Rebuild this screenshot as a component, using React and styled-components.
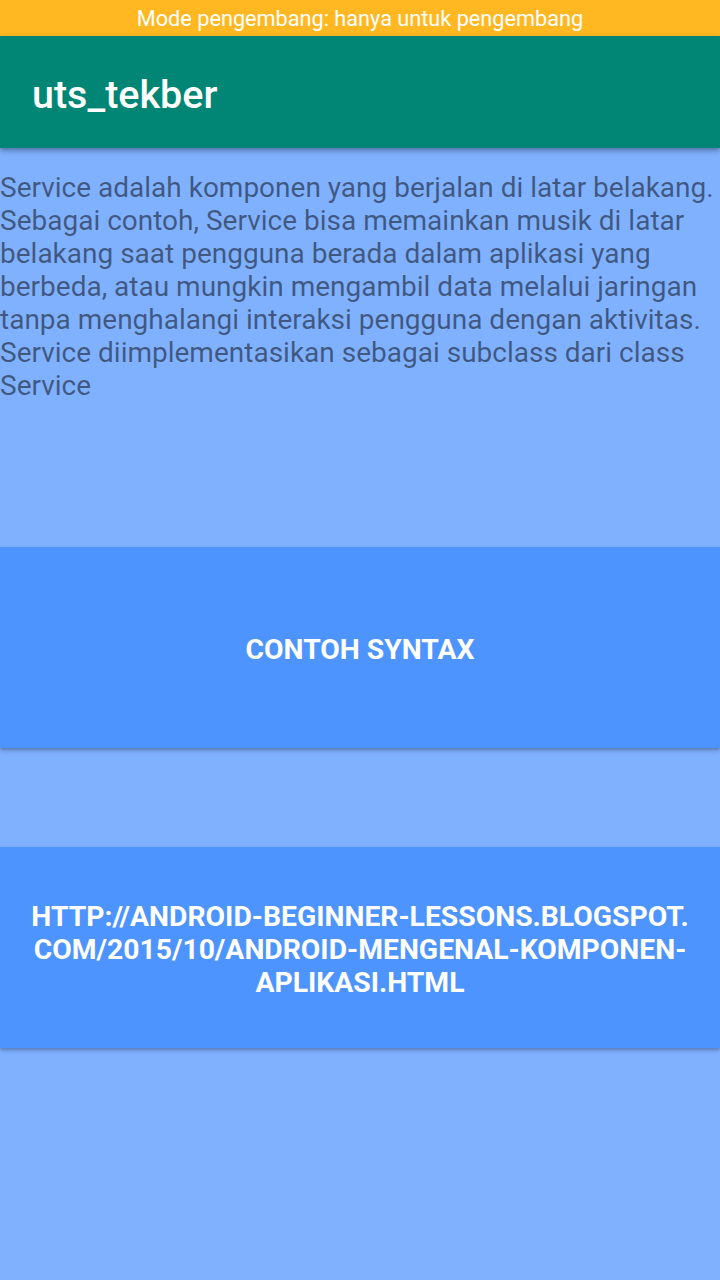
import React from "react";
import styled, { createGlobalStyle } from "styled-components";

const Global = createGlobalStyle`
  html, body { margin: 0; padding: 0; }
  body {
    background: #80b1ff;
    font-family: Roboto, "Noto Sans", "Liberation Sans", sans-serif;
  }
`;

const Screen = styled.div`
  width: 720px;
  min-height: 1280px;
  background: #80b1ff;
  display: flex;
  flex-direction: column;
  overflow: hidden;
`;

const StatusBar = styled.div`
  height: 36px;
  background: #ffb822;
  color: #ffffff;
  font-size: 21.7px;
  display: flex;
  align-items: center;
  justify-content: center;
`;

const AppBar = styled.header`
  height: 112px;
  background: #018675;
  display: flex;
  align-items: center;
  padding: 0 32px;
  box-shadow: 0 2px 4px rgba(0, 0, 0, 0.28), 0 4px 8px rgba(0, 0, 0, 0.12);
  position: relative;
  z-index: 2;
`;

const Title = styled.h1`
  margin: 0;
  margin-top: 4px;
  font-size: 39.5px;
  font-weight: 500;
  color: #ffffff;
`;

const Content = styled.main`
  display: flex;
  flex-direction: column;
`;

const Paragraph = styled.p`
  margin: 0;
  padding-top: 23px;
  height: 376px;
  box-sizing: border-box;
  height: 399px;
  font-size: 28px;
  line-height: 33px;
  color: rgba(0, 0, 0, 0.5);
`;

const ActionButton = styled.button`
  border: none;
  width: 100%;
  height: 201px;
  margin-bottom: ${(p) => p.$gap || 0}px;
  background: #4d94ff;
  color: #ffffff;
  font-family: Roboto, "Noto Sans", "Liberation Sans", sans-serif;
  font-weight: 700;
  font-size: 28.3px;
  line-height: 33px;
  text-transform: uppercase;
  padding: 4px 16px 0;
  box-shadow: 0 2px 3px rgba(0, 0, 0, 0.22), 0 3px 6px rgba(0, 0, 0, 0.1);
  display: flex;
  flex-direction: column;
  align-items: center;
  justify-content: center;
  text-align: center;
`;

const Line = styled.span`
  display: block;
  white-space: nowrap;
`;

export default function App() {
  return (
    <Screen>
      <Global />
      <StatusBar>Mode pengembang: hanya untuk pengembang</StatusBar>
      <AppBar>
        <Title>uts_tekber</Title>
      </AppBar>
      <Content>
        <Paragraph>
          Service adalah komponen yang berjalan di latar belakang. Sebagai
          contoh, Service bisa memainkan musik di latar belakang saat pengguna
          berada dalam aplikasi yang berbeda, atau mungkin mengambil data
          melalui jaringan tanpa menghalangi interaksi pengguna dengan
          aktivitas. Service diimplementasikan sebagai subclass dari class
          Service
        </Paragraph>
        <ActionButton $gap={99}>Contoh Syntax</ActionButton>
        <ActionButton>
          <Line>http://android-beginner-lessons.blogspot.</Line>
          <Line>com/2015/10/android-mengenal-komponen-</Line>
          <Line>aplikasi.html</Line>
        </ActionButton>
      </Content>
    </Screen>
  );
}
